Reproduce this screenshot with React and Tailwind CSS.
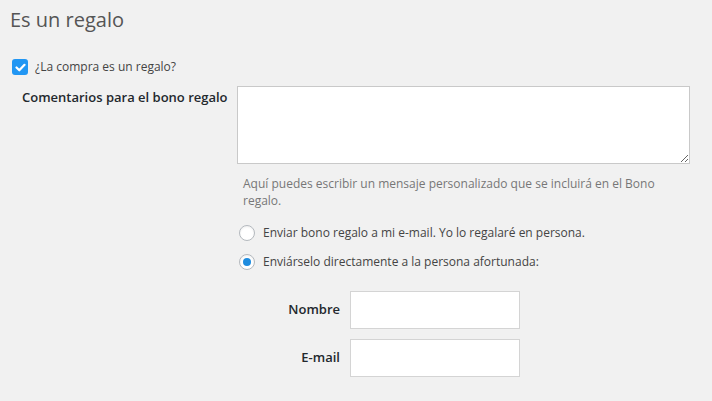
import React from "react";

function Radio({ checked, label }) {
  return (
    <label className="flex items-center h-5 ml-[2px] gap-2 text-[12px] text-[#444]">
      <span className="w-4 h-4 rounded-full bg-white border border-[#b4b9be] grid place-items-center shadow-[inset_0_1px_2px_rgba(0,0,0,0.07)]">
        {checked && <span className="w-2 h-2 rounded-full bg-[#1e8cdf]" />}
      </span>
      <span>{label}</span>
    </label>
  );
}

export default function App() {
  return (
    <div
      className="w-[712px] h-[401px] bg-[#f1f1f1] overflow-hidden"
      style={{ fontFamily: '"Open Sans", "Liberation Sans", sans-serif' }}
    >
      <div className="pl-[10px] pt-[6px]">
        <h2 className="text-[20px] leading-[28px] text-[#555] font-normal">
          Es un regalo
        </h2>

        {/* checkbox */}
        <div className="mt-[23px] h-5 flex items-center gap-[7px] pl-[2px]">
          <span className="w-4 h-4 rounded-[3px] bg-[#2196f3] grid place-items-center">
            <svg width="11" height="9" viewBox="0 0 11 9" fill="none">
              <path
                d="M1.5 4.5l2.8 2.8L9.5 1.8"
                stroke="#fff"
                strokeWidth="2.2"
                strokeLinecap="round"
                strokeLinejoin="round"
              />
            </svg>
          </span>
          <span className="text-[12px] text-[#444]">¿La compra es un regalo?</span>
        </div>

        {/* comentarios */}
        <div className="mt-[9px] flex gap-[10px] pl-3">
          <label className="w-[205px] whitespace-nowrap pt-[1px] text-[13px] leading-5 font-semibold text-[#23282d]">
            Comentarios para el bono regalo
          </label>
          <div className="w-[453px]">
            <textarea className="block w-[453px] h-[78px] bg-white border border-[#c9c9c9] outline-none" />
            <p className="mt-[11px] pl-[6px] pr-[14px] text-[12px] leading-[17px] text-[#777]">
              Aquí puedes escribir un mensaje personalizado que se incluirá en el Bono regalo.
            </p>
            <div className="mt-[14px] flex flex-col gap-[9px]">
              <Radio label="Enviar bono regalo a mi e-mail. Yo lo regalaré en persona." />
              <Radio checked label="Enviárselo directamente a la persona afortunada:" />
            </div>
          </div>
        </div>

        {/* destinatario */}
        <div className="mt-[19px] flex flex-col gap-[10px]">
          <div className="flex items-center gap-[10px]">
            <label className="w-[330px] text-right text-[13px] font-semibold text-[#23282d]">
              Nombre
            </label>
            <input className="w-[170px] h-[38px] bg-white border border-[#d4d4d4] outline-none" />
          </div>
          <div className="flex items-center gap-[10px]">
            <label className="w-[330px] text-right text-[13px] font-semibold text-[#23282d]">
              E-mail
            </label>
            <input className="w-[170px] h-[38px] bg-white border border-[#d4d4d4] outline-none" />
          </div>
        </div>
      </div>
    </div>
  );
}
